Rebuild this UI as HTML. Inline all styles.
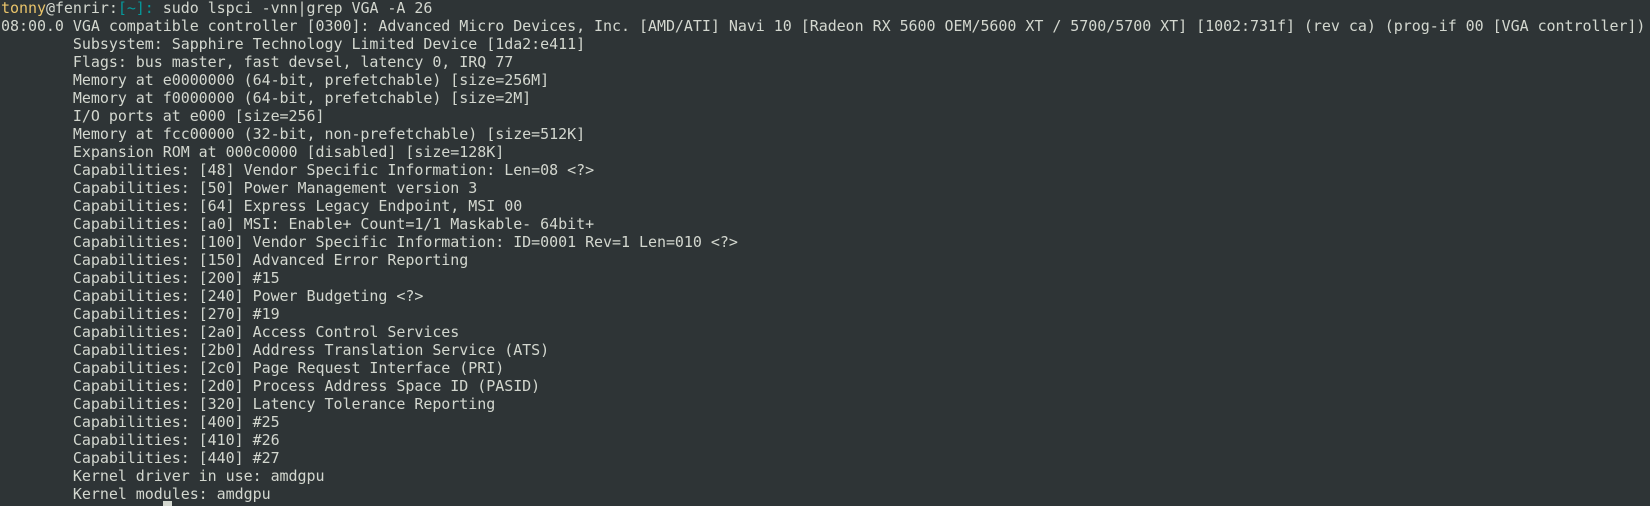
<!DOCTYPE html>
<html><head><meta charset="utf-8"><style>
html,body{margin:0;padding:0;background:#2e3436;width:1650px;height:504px;overflow:hidden}
pre{margin:0;position:absolute;left:1px;top:-1px;font-family:"DejaVu Sans Mono","Liberation Mono",monospace;font-size:15px;letter-spacing:-0.045px;line-height:18px;color:#d3d7cf;white-space:pre}
.y{color:#e9c46a}.t{color:#06989a}
.cur{position:absolute;left:163px;top:501px;width:9px;height:5px;background:#d3d7cf}
</style></head><body>
<pre><span class="y">tonny</span>@fenrir:<span class="t">[~]:</span> sudo lspci -vnn|grep VGA -A 26
08:00.0 VGA compatible controller [0300]: Advanced Micro Devices, Inc. [AMD/ATI] Navi 10 [Radeon RX 5600 OEM/5600 XT / 5700/5700 XT] [1002:731f] (rev ca) (prog-if 00 [VGA controller])
        Subsystem: Sapphire Technology Limited Device [1da2:e411]
        Flags: bus master, fast devsel, latency 0, IRQ 77
        Memory at e0000000 (64-bit, prefetchable) [size=256M]
        Memory at f0000000 (64-bit, prefetchable) [size=2M]
        I/O ports at e000 [size=256]
        Memory at fcc00000 (32-bit, non-prefetchable) [size=512K]
        Expansion ROM at 000c0000 [disabled] [size=128K]
        Capabilities: [48] Vendor Specific Information: Len=08 &lt;?&gt;
        Capabilities: [50] Power Management version 3
        Capabilities: [64] Express Legacy Endpoint, MSI 00
        Capabilities: [a0] MSI: Enable+ Count=1/1 Maskable- 64bit+
        Capabilities: [100] Vendor Specific Information: ID=0001 Rev=1 Len=010 &lt;?&gt;
        Capabilities: [150] Advanced Error Reporting
        Capabilities: [200] #15
        Capabilities: [240] Power Budgeting &lt;?&gt;
        Capabilities: [270] #19
        Capabilities: [2a0] Access Control Services
        Capabilities: [2b0] Address Translation Service (ATS)
        Capabilities: [2c0] Page Request Interface (PRI)
        Capabilities: [2d0] Process Address Space ID (PASID)
        Capabilities: [320] Latency Tolerance Reporting
        Capabilities: [400] #25
        Capabilities: [410] #26
        Capabilities: [440] #27
        Kernel driver in use: amdgpu
        Kernel modules: amdgpu</pre>
<div class="cur"></div>
</body></html>
